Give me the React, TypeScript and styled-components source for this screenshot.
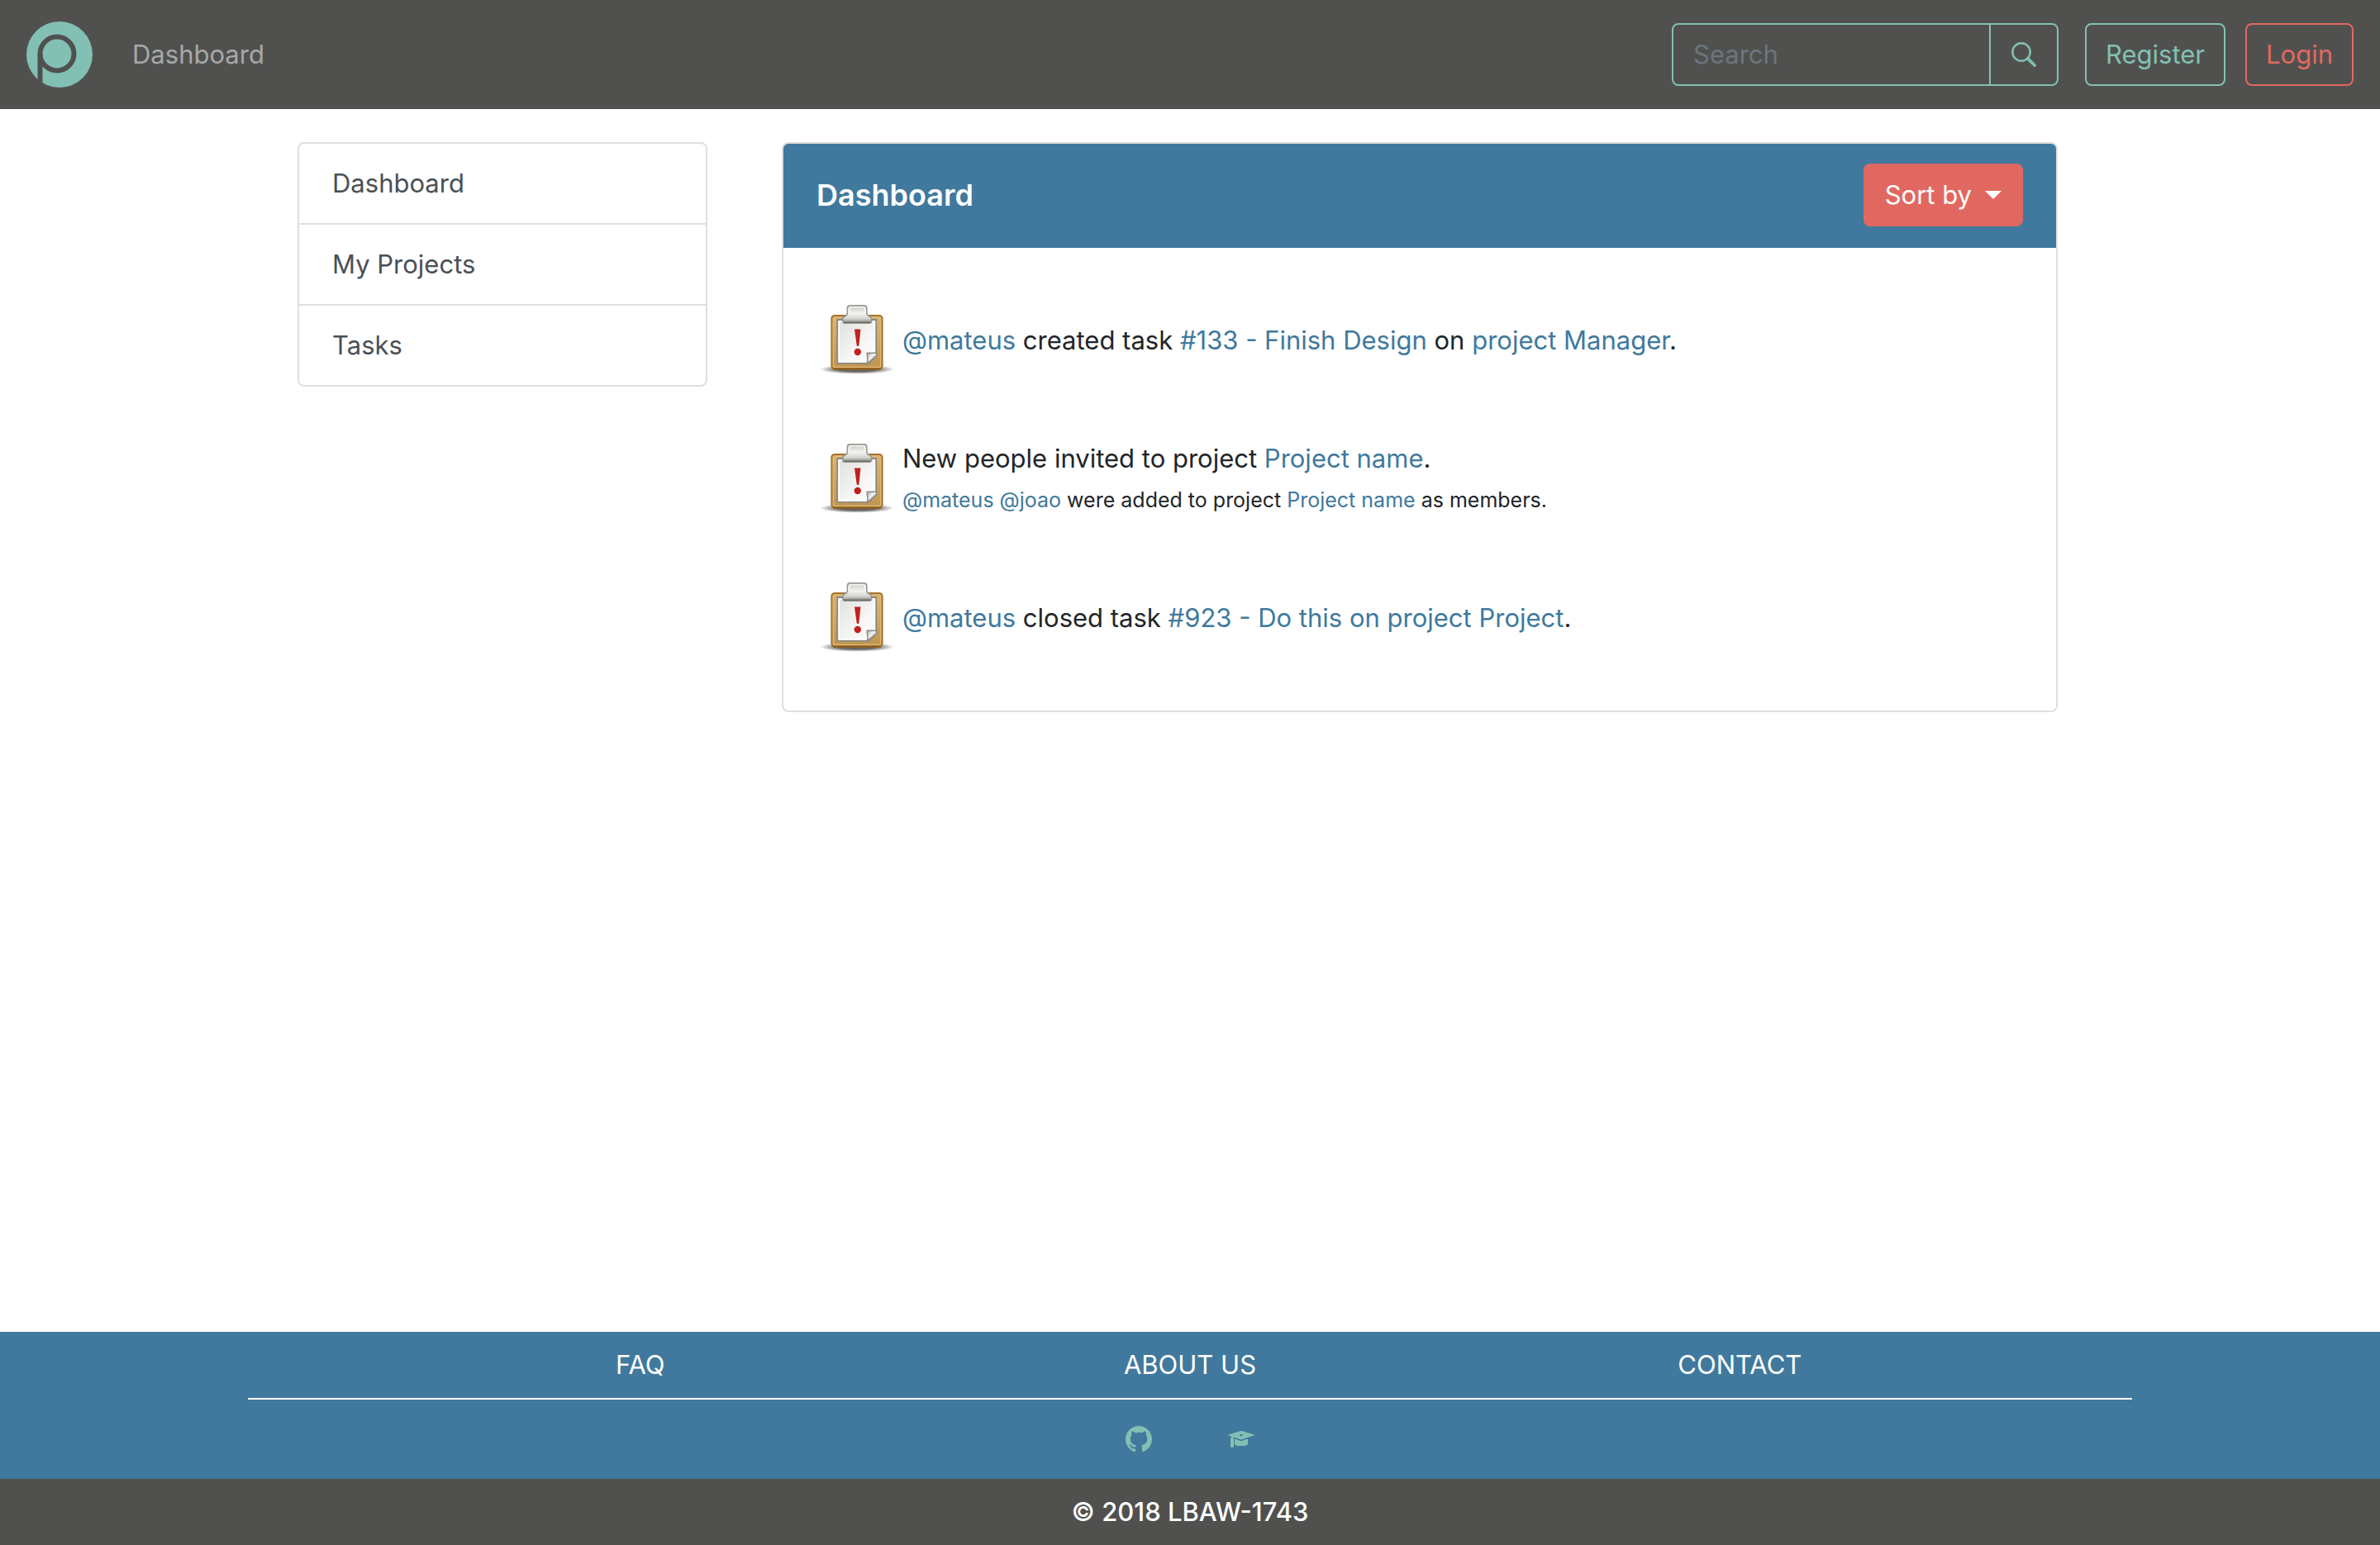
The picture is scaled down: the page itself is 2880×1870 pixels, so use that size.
import React from "react";
import styled, { createGlobalStyle } from "styled-components";

const color = {
  dark: "#50514f",
  blue: "#40799d",
  mint: "#83c0b4",
  coral: "#e16860",
  border: "#dfdfdf",
  text: "#212529",
  muted: "#495057",
};

const GlobalStyle = createGlobalStyle`
  *, *::before, *::after { box-sizing: border-box; }
  body {
    margin: 0;
    background: #fff;
    color: ${color.text};
    font-family: Inter, "Liberation Sans", sans-serif;
    font-size: 31px;
    line-height: 48px;
  }
  button, input { font: inherit; }
  a { color: ${color.blue}; text-decoration: none; }
`;

const Page = styled.div`
  display: flex;
  flex-direction: column;
  min-height: 100vh;
`;

const NavBar = styled.header`
  display: flex;
  align-items: center;
  padding: 16px 32px;
  min-height: 132px;
  background: ${color.dark};
`;

const Brand = styled.a`
  display: flex;
  margin-right: 48px;
`;

const NavLinks = styled.nav`
  flex: 1;
  a { color: #a8a8a7; }
`;

const SearchForm = styled.form`
  display: flex;
  width: 468px;
  height: 76px;
  margin-right: 32px;
  border: 2px solid ${color.mint};
  border-radius: 8px;
`;

const SearchInput = styled.input`
  flex: 1;
  min-width: 0;
  padding: 0 24px;
  border: 0;
  outline: 0;
  background: transparent;
  color: ${color.mint};
  &::placeholder { color: #6c757d; opacity: 1; }
`;

const SearchButton = styled.button`
  display: flex;
  align-items: center;
  justify-content: center;
  width: 82px;
  padding: 0;
  border: 0;
  border-left: 2px solid ${color.mint};
  background: transparent;
  color: ${color.mint};
`;

const Account = styled.div`
  display: flex;
  gap: 24px;
`;

const OutlineButton = styled.button<{ $tone: string }>`
  height: 76px;
  padding: 0 23px;
  border: 2px solid ${(p) => p.$tone};
  border-radius: 8px;
  background: transparent;
  color: ${(p) => p.$tone};
`;

const Main = styled.main`
  flex: 1;
  display: flex;
  align-items: flex-start;
  gap: 90px;
  width: 100%;
  max-width: 2280px;
  margin: 0 auto;
  padding: 40px 90px 40px 60px;
`;

const SideMenu = styled.nav`
  display: flex;
  flex-direction: column;
  flex: 0 0 496px;
  border: 2px solid ${color.border};
  border-radius: 8px;
`;

const SideLink = styled.a`
  padding: 24px 40px;
  color: ${color.muted};
  & + & { border-top: 2px solid ${color.border}; }
`;

const Card = styled.section`
  flex: 1;
  border: 2px solid ${color.border};
  border-radius: 8px;
  overflow: hidden;
`;

const CardHeader = styled.div`
  display: flex;
  align-items: center;
  justify-content: space-between;
  padding: 24px 40px 26px;
  background: ${color.blue};
  color: #fff;
`;

const CardTitle = styled.h1`
  margin: 0;
  font-size: 36px;
  font-weight: 600;
  line-height: 48px;
`;

const SortButton = styled.button`
  display: flex;
  align-items: center;
  gap: 16px;
  height: 76px;
  padding: 0 26px;
  border: 0;
  border-radius: 8px;
  background: ${color.coral};
  color: #fff;
  &::after {
    content: "";
    border-top: 10px solid #fff;
    border-left: 10px solid transparent;
    border-right: 10px solid transparent;
  }
`;

const Feed = styled.ul`
  margin: 0;
  padding: 28px 40px;
  list-style: none;
`;

const FeedItem = styled.li`
  display: flex;
  align-items: center;
  gap: 8px;
  min-height: 168px;
  p { margin: 0; }
  small { font-size: 25px; }
`;

const Footer = styled.footer`
  background: ${color.blue};
`;

const FooterInner = styled.div`
  width: 100%;
  max-width: 2280px;
  margin: 0 auto;
`;

const FooterLinks = styled.nav`
  display: grid;
  grid-template-columns: repeat(3, 1fr);
  padding: 16px 142px;
  text-align: center;
  a { color: #fff; }
`;

const Social = styled.div`
  display: flex;
  align-items: center;
  justify-content: center;
  gap: 92px;
  height: 98px;
  border-top: 2px solid #fff;
  a { display: flex; color: ${color.mint}; }
`;

const Copyright = styled.div`
  padding: 16px;
  background: ${color.dark};
  color: #fff;
  font-weight: 500;
  text-align: center;
`;

const Logo = () => (
  <svg width="80" height="80" viewBox="0 0 80 80" aria-hidden="true">
    <circle cx="40" cy="40" r="40" fill={color.mint} />
    <circle cx="37" cy="39" r="20.5" fill="none" stroke={color.dark} strokeWidth="6" />
    <path d="M16.5 39V80" stroke={color.dark} strokeWidth="6" />
  </svg>
);

const SearchIcon = () => (
  <svg width="30" height="30" viewBox="0 0 30 30" fill="none" stroke="currentColor" aria-hidden="true">
    <circle cx="12" cy="12" r="10.7" strokeWidth="2.4" />
    <path d="M19.8 19.8L28 28" strokeWidth="3.8" strokeLinecap="round" />
  </svg>
);

const GithubIcon = () => (
  <svg width="32" height="32" viewBox="0 0 16 16" fill="currentColor" aria-hidden="true">
    <path d="M8 0C3.58 0 0 3.58 0 8c0 3.54 2.29 6.53 5.47 7.59.4.07.55-.17.55-.38 0-.19-.01-.82-.01-1.49-2.01.37-2.53-.49-2.69-.94-.09-.23-.48-.94-.82-1.13-.28-.15-.68-.52-.01-.53.63-.01 1.08.58 1.23.82.72 1.21 1.87.87 2.33.66.07-.52.28-.87.51-1.07-1.78-.2-3.64-.89-3.64-3.95 0-.87.31-1.59.82-2.15-.08-.2-.36-1.02.08-2.12 0 0 .67-.21 2.2.82.64-.18 1.32-.27 2-.27.68 0 1.36.09 2 .27 1.53-1.04 2.2-.82 2.2-.82.44 1.1.16 1.92.08 2.12.51.56.82 1.27.82 2.15 0 3.07-1.87 3.75-3.65 3.95.29.25.54.73.54 1.48 0 1.07-.01 1.93-.01 2.2 0 .21.15.46.55.38A8.013 8.013 0 0016 8c0-4.42-3.58-8-8-8z" />
  </svg>
);

const GraduationIcon = () => (
  <svg width="32" height="32" viewBox="0 0 32 32" fill="currentColor" aria-hidden="true">
    <path
      fillRule="evenodd"
      d="M16 5.7L31.6 10.4Q32.4 10.8 31.6 11.2L16 16.6L6.3 13.4V14.6Q7 15 7 16V25.8H3V16Q3 15 3.8 14.6V12.4L.4 11.2Q-.4 10.8.4 10.4ZM16 10C14.9 10 14 10.4 14 11S14.9 12 16 12 18 11.6 18 11 17.1 10 16 10Z"
    />
    <path d="M8 15.6L16 18.3L24 15.6V21.4Q24 24 16 24T8 21.4Z" />
  </svg>
);

const ClipboardIcon = () => (
  <svg width="96" height="96" viewBox="0 0 48 48" aria-hidden="true">
    <defs>
      <radialGradient id="shade">
        <stop offset="0.5" stopColor="#000" stopOpacity="0.6" />
        <stop offset="1" stopColor="#000" stopOpacity="0" />
      </radialGradient>
      <linearGradient id="wood" x2="0" y2="1">
        <stop stopColor="#dcb473" />
        <stop offset="1" stopColor="#c09550" />
      </linearGradient>
      <linearGradient id="sheet" x2="1" y2="1">
        <stop stopColor="#dfe0dc" />
        <stop offset="0.6" stopColor="#f6f6f5" />
        <stop offset="1" stopColor="#fff" />
      </linearGradient>
      <linearGradient id="metal" x2="0" y2="1">
        <stop stopColor="#c4c5c0" />
        <stop offset="0.45" stopColor="#f3f3f1" />
        <stop offset="0.75" stopColor="#d5d6d2" />
        <stop offset="1" stopColor="#85877f" />
      </linearGradient>
      <linearGradient id="fold" x2="1" y2="1">
        <stop stopColor="#9a9c97" />
        <stop offset="0.4" stopColor="#f4f4f2" />
        <stop offset="0.7" stopColor="#babbb7" />
      </linearGradient>
    </defs>
    <ellipse cx="24.5" cy="41.5" rx="22.5" ry="2.9" fill="url(#shade)" />
    <rect x="9.2" y="9" width="30.6" height="32.2" rx="1.8" fill="url(#wood)" stroke="#a5712a" />
    <rect x="10.2" y="10" width="28.6" height="30.2" rx="1" fill="none" stroke="#e0b978" strokeWidth="0.6" />
    <path d="M10 41.3H39" stroke="#8a5a18" />
    <path d="M12.7 11.5H36V33.5L31.5 37.8H12.7Z" fill="url(#sheet)" stroke="#868882" />
    <path d="M13.6 12.4H35.2V33L31 36.9H13.6Z" fill="none" stroke="#fff" strokeWidth="0.9" />
    <path d="M30.7 38C31.2 36.5 31 34.500 30.600 33V31.600H36.400V33.300Z" fill="url(#fold)" stroke="#8b8d87" strokeWidth="0.7" />
    <path
      d="M20.3 2.9H28.8Q30.4 2.9 30.4 4.5V7.6Q30.6 9 32 9.4Q33.3 9.9 33.3 11.5V12.2Q33.3 13.4 32 13.4H17.2Q15.9 13.4 15.9 12.2V11.5Q15.9 9.9 17.2 9.4Q18.5 9 18.7 7.6V4.5Q18.7 2.9 20.3 2.9Z"
      fill="url(#metal)"
      stroke="#969891"
      strokeWidth="0.8"
    />
    <path d="M19.7 7.5V5.3Q19.7 3.9 21 3.9H28.1Q29.4 3.9 29.4 5.3V7.5" fill="none" stroke="#fff" strokeOpacity="0.8" strokeWidth="0.8" />
    <path d="M16.5 13.2H32.7" stroke="#6f716b" />
    <path d="M23 17.2H26.7L25.7 27.4H24.4Z" fill="#c0221c" />
    <circle cx="24.9" cy="31" r="2.1" fill="#c0221c" />
  </svg>
);

export default function App() {
  return (
    <>
      <GlobalStyle />
      <Page>
        <NavBar>
          <Brand href="#" aria-label="Home">
            <Logo />
          </Brand>
          <NavLinks>
            <a href="#">Dashboard</a>
          </NavLinks>
          <SearchForm role="search">
            <SearchInput type="search" placeholder="Search" aria-label="Search" />
            <SearchButton type="button" aria-label="Submit search">
              <SearchIcon />
            </SearchButton>
          </SearchForm>
          <Account>
            <OutlineButton type="button" $tone={color.mint}>Register</OutlineButton>
            <OutlineButton type="button" $tone={color.coral}>Login</OutlineButton>
          </Account>
        </NavBar>

        <Main>
          <SideMenu>
            {["Dashboard", "My Projects", "Tasks"].map((label) => (
              <SideLink key={label} href="#">{label}</SideLink>
            ))}
          </SideMenu>

          <Card>
            <CardHeader>
              <CardTitle>Dashboard</CardTitle>
              <SortButton type="button" aria-haspopup="menu">Sort by</SortButton>
            </CardHeader>
            <Feed>
              <FeedItem>
                <ClipboardIcon />
                <p>
                  <a href="#">@mateus</a> created task <a href="#">#133 - Finish Design</a> on{" "}
                  <a href="#">project Manager</a>.
                </p>
              </FeedItem>
              <FeedItem>
                <ClipboardIcon />
                <div>
                  <p>
                    New people invited to project <a href="#">Project name</a>.
                  </p>
                  <p>
                    <small>
                      <a href="#">@mateus</a> <a href="#">@joao</a> were added to project{" "}
                      <a href="#">Project name</a> as members.
                    </small>
                  </p>
                </div>
              </FeedItem>
              <FeedItem>
                <ClipboardIcon />
                <p>
                  <a href="#">@mateus</a> closed task <a href="#">#923 - Do this on project Project</a>.
                </p>
              </FeedItem>
            </Feed>
          </Card>
        </Main>

        <Footer>
          <FooterInner>
            <FooterLinks>
              <a href="#">FAQ</a>
              <a href="#">ABOUT US</a>
              <a href="#">CONTACT</a>
            </FooterLinks>
            <Social>
              <a href="#" aria-label="GitHub"><GithubIcon /></a>
              <a href="#" aria-label="University"><GraduationIcon /></a>
            </Social>
          </FooterInner>
          <Copyright>© 2018 LBAW-1743</Copyright>
        </Footer>
      </Page>
    </>
  );
}
